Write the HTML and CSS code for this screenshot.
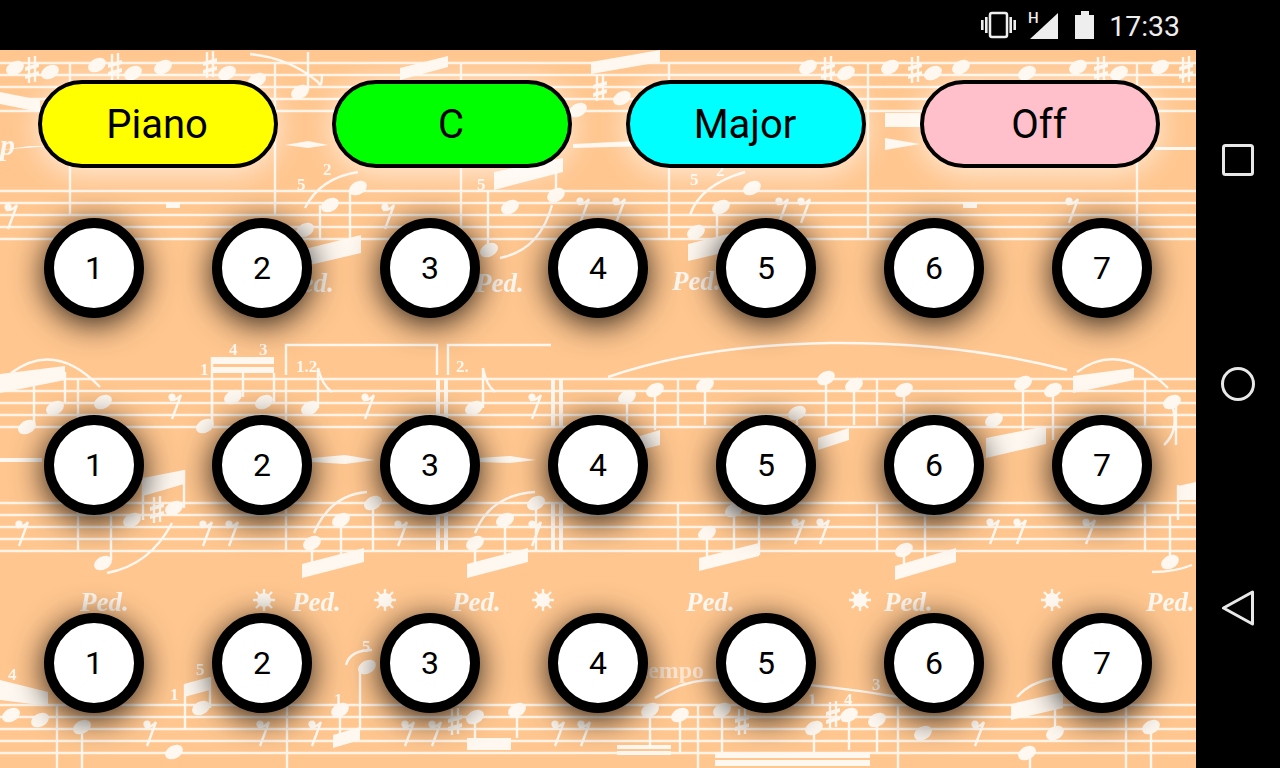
FILE: index.html
```html
<!DOCTYPE html>
<html lang="en">
<head>
    <meta charset="UTF-8">
    <meta name="viewport" content="width=device-width, initial-scale=1.0">
    <title>Chord Buttons</title>
    <link rel="stylesheet" href="styles.css">
</head>
<body>
<div class="device">
    <div class="mainColumn">
        <div class="statusBar">
            <svg class="statusIcon vibrateIcon" width="36" height="28" viewBox="0 0 36 28">
                <rect x="10" y="2" width="17" height="24" rx="2" class="iconLine"/>
                <rect x="1" y="9" width="2.6" height="10" class="iconFill"/>
                <rect x="5" y="6" width="2.6" height="16" class="iconFill"/>
                <rect x="29.4" y="6" width="2.6" height="16" class="iconFill"/>
                <rect x="33.4" y="9" width="2.6" height="10" class="iconFill"/>
            </svg>
            <svg class="statusIcon signalIcon" width="36" height="44" viewBox="-4 -8 36 44">
                <text x="1" y="12" class="signalLetter">H</text>
                <polygon points="3,28 31,2 31,28" class="iconFill"/>
            </svg>
            <svg class="statusIcon batteryIcon" width="19" height="28" viewBox="0 0 19 28">
                <path d="M6 0h8v4h5v24H0V4h6z" class="iconFill"/>
            </svg>
            <span class="clock">17:33</span>
        </div>

        <div class="app">
            <!-- sheet music behind the buttons -->
            <svg class="sheetMusic" width="1196" height="718" viewBox="0 50 1196 718">
                <defs>
                    <ellipse id="head" rx="9.5" ry="6.5" transform="rotate(-28)"/>
                    <g id="rest">
                        <circle cx="-4" cy="-6" r="3.6"/>
                        <path d="M-6 -3 Q0 -2 5 -8 L-4 16" class="musicStroke"/>
                    </g>
                    <g id="sharp">
                        <path d="M-3 -13V13M3 -14V12" class="musicStroke"/>
                        <path d="M-7 -3 7 -7V-3L-7 1zM-7 5 7 1V5L-7 9z"/>
                    </g>
                    <path id="beamRight" d="M0 10 60 -5V13L0 27z"/>
                    <g id="star">
                        <circle r="7"/>
                        <path d="M0 -11V11M-11 0H11M-8 -8 8 8M-8 8 8 -8" class="musicStroke"/>
                    </g>
                    <g id="staff">
                        <path d="M0 0H1196M0 12H1196M0 24H1196M0 36H1196M0 48H1196" class="staffLine"/>
                    </g>
                </defs>

                <!-- staves -->
                <use href="#staff" y="63"/>
                <use href="#staff" y="191"/>
                <use href="#staff" y="379"/>
                <use href="#staff" y="503"/>
                <use href="#staff" y="705"/>
                <path class="staffLine" d="M70 63V215M275 63V215M461 63V238M669 63V238M868 63V238M1137 63V238
                    M78 379V427M212 379V427M286 379V427M678 379V427M877 379V427M1145 379V427
                    M78 503V551M286 503V551M678 503V551M877 503V551M1145 503V551
                    M57 705V768M287 705V768M698 705V768M898 705V768M1126 705V768"/>
                <path class="heavyLine" d="M438 379V427M446 379V427M553 379V427M561 379V427M438 503V551M446 503V551M553 503V551M561 503V551"/>

                <!-- top system -->
                <use href="#head" x="15" y="68"/><use href="#head" x="50" y="72"/><use href="#head" x="97" y="65"/>
                <use href="#head" x="133" y="73"/><use href="#head" x="163" y="67"/><use href="#head" x="227" y="73"/>
                <use href="#head" x="257" y="80"/><use href="#head" x="300" y="92"/><use href="#head" x="578" y="110"/>
                <use href="#head" x="622" y="98"/><use href="#head" x="808" y="67"/><use href="#head" x="846" y="73"/>
                <use href="#head" x="890" y="67"/><use href="#head" x="933" y="73"/><use href="#head" x="961" y="67"/>
                <use href="#head" x="1027" y="73"/><use href="#head" x="1078" y="67"/><use href="#head" x="1119" y="73"/>
                <use href="#head" x="1160" y="67"/>
                <use href="#sharp" x="32" y="70"/><use href="#sharp" x="115" y="67"/><use href="#sharp" x="210" y="65"/>
                <use href="#sharp" x="828" y="70"/><use href="#sharp" x="915" y="70"/><use href="#sharp" x="1101" y="70"/>
                <use href="#sharp" x="1186" y="70"/><use href="#sharp" x="534" y="95"/><use href="#sharp" x="600" y="88"/>
                <path d="M0 92 40 100V112L0 104zM400 68 448 56V67L400 80zM591 62 660 50V62L591 74zM885 113H920V127H885z"/>
                <path d="M30 146H50L0 150zM285 145 308 141 328 145 308 148zM573 144 655 140V146L573 148zM885 138 920 144 885 150zM1155 147H1196V150H1155z"/>
                <path class="musicStroke" d="M250 54Q290 58 318 82Q322 90 322 74M308 52V90"/>
                <text x="0" y="155" class="musicMark">p</text>

                <use href="#rest" x="12" y="213"/><use href="#rest" x="389" y="213"/><use href="#rest" x="584" y="207"/>
                <use href="#rest" x="620" y="207"/><use href="#rest" x="783" y="207"/><use href="#rest" x="805" y="207"/>
                <use href="#rest" x="1073" y="207"/>
                <path d="M166 202H180V208H166zM963 202H977V208H963z"/>
                <use href="#head" x="305" y="230"/><use href="#head" x="330" y="205"/><use href="#head" x="358" y="188"/>
                <use href="#head" x="510" y="207"/><use href="#head" x="556" y="195"/><use href="#head" x="489" y="250"/>
                <use href="#head" x="696" y="232"/><use href="#head" x="721" y="207"/><use href="#head" x="752" y="188"/>
                <use href="#beamRight" x="305" y="238" transform="translate(-4 2) scale(1 1)"/>
                <path d="M494 172 563 158V172L494 190z"/>
                <use href="#beamRight" x="688" y="234"/>
                <path class="musicStroke" d="M305 208Q320 178 358 172M320 205V240M350 190V240M488 250V190M556 195V160M500 258Q540 250 552 205M690 215Q700 185 745 172M717 210V240"/>
                <text x="297" y="190" class="musicDigit">5</text><text x="323" y="175" class="musicDigit">2</text>
                <text x="477" y="190" class="musicDigit">5</text><text x="690" y="185" class="musicDigit">5</text>
                <text x="716" y="176" class="musicDigit">2</text>

                <!-- pedal marks under the top system -->
                <text x="285" y="292" class="pedalMark">Ped.</text><text x="475" y="292" class="pedalMark">Ped.</text>
                <text x="672" y="290" class="pedalMark">Ped.</text>

                <!-- middle system, upper staff -->
                <path d="M0 374 65 366V380L0 393zM212 357H274V364H212zM212 367H274V373H212z"/>
                <path class="musicStroke" d="M11 373Q55 340 100 387M212 357V426M243 373V397M274 373V402M34 385V427M65 372V402M286 375V345H437V375M448 375V345H551"/>
                <use href="#head" x="27" y="427"/><use href="#head" x="55" y="408"/><use href="#head" x="103" y="402"/>
                <use href="#head" x="233" y="397"/><use href="#head" x="264" y="402"/><use href="#head" x="205" y="426"/>
                <use href="#head" x="310" y="408"/><use href="#head" x="474" y="408"/>
                <use href="#rest" x="176" y="403"/><use href="#rest" x="369" y="403"/><use href="#rest" x="536" y="403"/>
                <path class="musicStroke" d="M318 368Q322 385 332 392M318 368V408M483 368Q486 385 495 392M483 368V408"/>
                <text x="229" y="355" class="musicDigit">4</text><text x="259" y="355" class="musicDigit">3</text>
                <text x="200" y="375" class="musicDigit">1</text><text x="296" y="372" class="musicDigit">1.2</text>
                <text x="456" y="372" class="musicDigit">2.</text>
                <path d="M0 458H42V462H0zM312 458 345 455 375 460 345 464 312 462zM478 458 510 456 536 460 510 463 478 462z"/>

                <path class="musicStroke" d="M608 377Q700 345 830 343Q960 342 1067 370M705 385V425M826 378V428M854 385V425M797 413V425M904 390V425M1023 383V430M1053 390V440M627 397V428M655 390V430"/>
                <use href="#head" x="627" y="397"/><use href="#head" x="655" y="390"/><use href="#head" x="705" y="385"/>
                <use href="#head" x="826" y="378"/><use href="#head" x="854" y="385"/><use href="#head" x="904" y="390"/>
                <use href="#head" x="1023" y="383"/><use href="#head" x="1053" y="390"/><use href="#head" x="797" y="413"/>
                <use href="#head" x="994" y="420"/><use href="#head" x="1172" y="402"/>
                <path d="M640 436 660 430V445L640 450zM818 438 849 428V440L818 450zM986 438 1046 426V444L986 458zM1073 376 1134 368V380L1073 393zM1136 450H1146V462H1136z"/>
                <path class="musicStroke" d="M1077 372Q1120 340 1168 388M1172 405Q1180 430 1164 445M1176 402V445"/>

                <!-- middle system, lower staff -->
                <path d="M143 478 184 470V484L143 496zM302 564 364 548V562L302 578zM467 564 528 548V562L467 578zM699 558 759 543V556L699 571zM895 566 956 548V562L895 580zM1178 486 1196 482V500H1178z"/>
                <path class="musicStroke" d="M111 515V560M107 573Q150 565 172 523M143 480V520M184 470V508M314 533Q330 495 367 492M312 543V570M341 520V560M373 503V550M475 533Q490 495 535 492M475 543V570M505 520V560M536 503V550M707 533V560M734 510V560M759 510V555M904 550V575M925 510V565M1170 562V515M1178 485V520M1152 572Q1175 572 1192 565"/>
                <use href="#sharp" x="157" y="510"/>
                <use href="#head" x="132" y="520"/><use href="#head" x="174" y="508"/><use href="#head" x="103" y="563"/>
                <use href="#head" x="312" y="543"/><use href="#head" x="341" y="520"/><use href="#head" x="373" y="503"/>
                <use href="#head" x="475" y="543"/><use href="#head" x="505" y="520"/><use href="#head" x="536" y="503"/>
                <use href="#head" x="707" y="533"/><use href="#head" x="734" y="510"/><use href="#head" x="904" y="550"/>
                <use href="#head" x="1170" y="562"/>
                <use href="#rest" x="23" y="530"/><use href="#rest" x="207" y="530"/><use href="#rest" x="233" y="530"/>
                <use href="#rest" x="402" y="530"/><use href="#rest" x="536" y="530"/><use href="#rest" x="799" y="528"/>
                <use href="#rest" x="824" y="528"/><use href="#rest" x="994" y="528"/><use href="#rest" x="1021" y="528"/>
                <use href="#rest" x="1090" y="528"/>

                <!-- pedal line -->
                <text x="80" y="611" class="pedalMark">Ped.</text><text x="292" y="611" class="pedalMark">Ped.</text>
                <text x="452" y="611" class="pedalMark">Ped.</text><text x="686" y="611" class="pedalMark">Ped.</text>
                <text x="884" y="611" class="pedalMark">Ped.</text><text x="1146" y="611" class="pedalMark">Ped.</text>
                <use href="#star" x="264" y="600"/><use href="#star" x="385" y="600"/><use href="#star" x="543" y="600"/>
                <use href="#star" x="860" y="600"/><use href="#star" x="1052" y="600"/>

                <!-- bottom system -->
                <text x="640" y="678" class="tempoMark">tempo</text>
                <path d="M0 680 48 692V700L0 692zM0 692 48 700V706L0 700zM184 684 210 677V690L184 697zM333 735 360 727V740L333 748zM467 738H511V750H467zM617 745H671V749H617zM617 751H671V755H617zM715 752H870V758H715zM715 760H870V766H715zM1011 704 1063 692V708L1011 720z"/>
                <path class="musicStroke" d="M655 698Q680 682 707 680Q800 680 898 697M1017 697Q1030 682 1055 678M346 665Q350 650 372 650M340 710V735M360 668V730M185 684V730M210 677V708M82 727V768M475 717V738M517 710V738M650 710V745M680 715V752M722 710V752M849 715V750M814 728V752M877 720V752M1055 733V700M1151 727V768M1030 753V768"/>
                <use href="#head" x="11" y="715"/><use href="#head" x="40" y="720"/><use href="#head" x="82" y="727"/>
                <use href="#head" x="201" y="708"/><use href="#head" x="174" y="752"/><use href="#head" x="340" y="710"/>
                <use href="#head" x="367" y="667"/><use href="#head" x="475" y="717"/><use href="#head" x="517" y="710"/>
                <use href="#head" x="650" y="710"/><use href="#head" x="680" y="715"/><use href="#head" x="722" y="710"/>
                <use href="#head" x="814" y="728"/><use href="#head" x="849" y="715"/><use href="#head" x="877" y="720"/>
                <use href="#head" x="923" y="733"/><use href="#head" x="1027" y="753"/><use href="#head" x="1055" y="733"/>
                <use href="#head" x="1151" y="727"/>
                <use href="#sharp" x="455" y="722"/><use href="#sharp" x="742" y="722"/><use href="#sharp" x="833" y="715"/>
                <use href="#rest" x="151" y="730"/><use href="#rest" x="264" y="730"/><use href="#rest" x="316" y="730"/>
                <use href="#rest" x="409" y="730"/><use href="#rest" x="436" y="730"/><use href="#rest" x="559" y="730"/>
                <use href="#rest" x="585" y="730"/><use href="#rest" x="979" y="730"/>
                <text x="8" y="680" class="musicDigit">4</text><text x="196" y="675" class="musicDigit">5</text>
                <text x="170" y="700" class="musicDigit">1</text><text x="362" y="652" class="musicDigit">5</text>
                <text x="334" y="705" class="musicDigit">1</text><text x="808" y="705" class="musicDigit">1</text>
                <text x="844" y="705" class="musicDigit">4</text><text x="872" y="690" class="musicDigit">3</text>
            </svg>

            <div class="controls">
                <button class="pill pillYellow">Piano</button>
                <button class="pill pillGreen">C</button>
                <button class="pill pillCyan">Major</button>
                <button class="pill pillPink">Off</button>
            </div>

            <div class="keyRow">
                <button class="key">1</button><button class="key">2</button><button class="key">3</button><button class="key">4</button><button class="key">5</button><button class="key">6</button><button class="key">7</button>
            </div>
            <div class="keyRow">
                <button class="key">1</button><button class="key">2</button><button class="key">3</button><button class="key">4</button><button class="key">5</button><button class="key">6</button><button class="key">7</button>
            </div>
            <div class="keyRow">
                <button class="key">1</button><button class="key">2</button><button class="key">3</button><button class="key">4</button><button class="key">5</button><button class="key">6</button><button class="key">7</button>
            </div>
        </div>
    </div>

    <div class="navBar">
        <svg width="36" height="36" viewBox="0 0 36 36">
            <rect x="3.5" y="3.5" width="29" height="29" rx="2" class="navLine"/>
        </svg>
        <svg width="36" height="36" viewBox="0 0 36 36">
            <circle cx="18" cy="18" r="15.5" class="navLine"/>
        </svg>
        <svg width="36" height="36" viewBox="0 0 36 36">
            <polygon points="3.5,18 32.5,2 32.5,34" class="navLine"/>
        </svg>
    </div>
</div>
</body>
</html>
```

FILE: styles.css
```css
body {
    margin: 0;
    padding: 0;
    background-color: black;
    font-family: Roboto, "Liberation Sans", sans-serif;
    overflow: hidden;
}

.device {
    display: flex;
    width: 1280px;
    height: 768px;
}

.mainColumn {
    display: flex;
    flex-direction: column;
    width: 1196px;
}

.statusBar {
    display: flex;
    align-items: center;
    justify-content: flex-end;
    height: 50px;
    padding-right: 16px;
    background-color: black;
}

.statusIcon {
    display: block;
    flex: none;
}

.vibrateIcon {
    margin-right: 7px;
}

.signalIcon {
    margin-right: 16px;
}

.batteryIcon {
    margin-right: 15px;
}

.iconLine {
    fill: none;
    stroke: #eeeeee;
    stroke-width: 2.5;
}

.iconFill {
    fill: #eeeeee;
}

.signalLetter {
    fill: #eeeeee;
    font-family: Roboto, sans-serif;
    font-size: 15px;
    font-weight: 500;
}

.clock {
    padding-top: 3px;
    color: #eeeeee;
    font-size: 28.4px;
    line-height: 47px;
}

.app {
    position: relative;
    flex: 1;
    overflow: hidden;
    background-color: #ffc68f;
}

.sheetMusic {
    position: absolute;
    top: 0;
    left: 0;
    fill: #fff8f0;
    filter: blur(0.4px);
}

.staffLine {
    fill: none;
    stroke: #fff4e8;
    stroke-width: 2.4;
}

.heavyLine {
    fill: none;
    stroke: #fff6ee;
    stroke-width: 4;
}

.musicStroke {
    fill: none;
    stroke: #fff8f0;
    stroke-width: 2.4;
}

.musicDigit {
    font-family: "Liberation Serif", serif;
    font-size: 17px;
    font-weight: bold;
}

.musicMark {
    font-family: "Liberation Serif", serif;
    font-size: 30px;
    font-weight: bold;
    font-style: italic;
}

.pedalMark {
    font-family: "Liberation Serif", serif;
    font-size: 27px;
    font-weight: bold;
    font-style: italic;
}

.tempoMark {
    font-family: "Liberation Serif", serif;
    font-size: 24px;
    font-weight: bold;
    opacity: 0.7;
}

.controls {
    position: relative;
    display: flex;
    gap: 54px;
    padding: 30px 0 0 38px;
}

.pill {
    width: 240px;
    height: 88px;
    padding: 0 2px 0 0;
    border: 4px solid black;
    border-radius: 44px;
    color: black;
    font-family: Roboto, sans-serif;
    font-size: 40px;
    box-shadow: 0 4px 30px rgba(255, 255, 255, 0.7);
}

.pillYellow {
    background-color: yellow;
}

.pillGreen {
    background-color: lime;
}

.pillCyan {
    background-color: cyan;
}

.pillPink {
    background-color: pink;
}

.keyRow {
    position: relative;
    display: flex;
    gap: 68px;
    padding-left: 44px;
    margin-top: 97px;
}

.controls + .keyRow {
    margin-top: 50px;
}

.keyRow:last-child {
    margin-top: 98px;
}

.key {
    width: 100px;
    height: 100px;
    padding: 0;
    border: 10px solid black;
    border-radius: 50%;
    background-color: white;
    color: black;
    font-family: Roboto, sans-serif;
    font-size: 32px;
    box-shadow: 0 6px 32px rgba(0, 0, 0, 0.85);
}

.navBar {
    display: flex;
    flex-direction: column;
    align-items: center;
    justify-content: center;
    gap: 188px;
    width: 84px;
    height: 768px;
}

.navLine {
    fill: none;
    stroke: #e8e8e8;
    stroke-width: 3;
    stroke-linejoin: round;
}
```
